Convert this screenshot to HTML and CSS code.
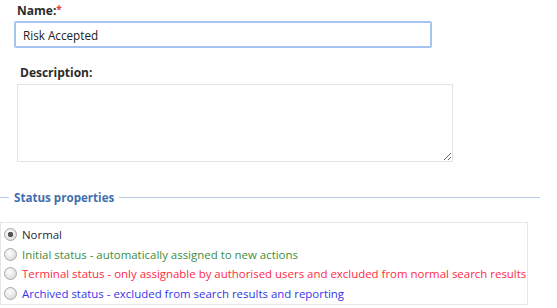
FILE: index.html
```html
<!doctype html>
<html lang="en">
    <head>
        <meta charset="UTF-8" />
        <title>Edit Status</title>
        <link rel="stylesheet" href="styles.css">
    </head>
    <body>
        <form class="status-form">
            <div class="form-group name-group">
                <label for="statusName">Name:<span class="required">*</span></label>
                <input type="text" id="statusName" class="text-input" value="Risk Accepted" />
            </div>

            <div class="form-group desc-group">
                <label for="statusDesc">Description:</label>
                <textarea id="statusDesc" class="text-area"></textarea>
            </div>

            <fieldset class="status-props">
                <legend>Status properties</legend>
                <div class="option-list">
                    <label class="option normal">
                        <input type="radio" name="statusType" checked />
                        <span>Normal</span>
                    </label>
                    <label class="option initial">
                        <input type="radio" name="statusType" />
                        <span>Initial status - automatically assigned to new actions</span>
                    </label>
                    <label class="option terminal">
                        <input type="radio" name="statusType" />
                        <span>Terminal status - only assignable by authorised users and excluded from normal search results</span>
                    </label>
                    <label class="option archived">
                        <input type="radio" name="statusType" />
                        <span>Archived status - excluded from search results and reporting</span>
                    </label>
                </div>
            </fieldset>
        </form>
    </body>
</html>
```

FILE: styles.css
```css
:root {
    --text-color: #222;
    --label-color: #2b2b2b;
    --focus-border: #a6c4f2;
    --input-border: #dde3ea;
    --legend-color: #3f6fae;
    --legend-line: #b9cae6;
    --box-border: #e9e7df;
}

body {
    margin: 0;
    font-family: "Open Sans", sans-serif;
    font-size: 12px;
    color: var(--text-color);
    background: #fff;
}

.status-form {
    display: flex;
    flex-direction: column;
    padding-top: 3px;
}

.form-group {
    display: flex;
    flex-direction: column;
    align-items: flex-start;
}

.form-group label {
    font-weight: 700;
    color: var(--label-color);
    line-height: 16px;
    margin-bottom: 2px;
}

.required {
    color: #e23b3b;
    font-size: 10px;
    vertical-align: top;
    line-height: 12px;
}

.name-group {
    padding-left: 14px;
}

.name-group label {
    margin-left: 3px;
}

.text-input {
    box-sizing: border-box;
    width: 418px;
    height: 27px;
    padding: 0 7px;
    border: 2px solid var(--focus-border);
    border-radius: 2px;
    font-family: inherit;
    font-size: 11.7px;
    color: var(--text-color);
    outline: none;
}

.desc-group {
    padding-left: 17px;
    margin-top: 17px;
}

.desc-group label {
    margin-left: 3px;
    margin-bottom: 3px;
}

.text-area {
    box-sizing: border-box;
    width: 436px;
    height: 78px;
    border: 1px solid var(--input-border);
    border-radius: 0;
    font-family: inherit;
    font-size: 12px;
    resize: both;
    outline: none;
}

.status-props {
    margin: 28px 0 0;
    padding: 0;
    width: 540px;
    border: none;
    border-top: 1px solid var(--legend-line);
}

.status-props legend {
    margin-left: 9px;
    padding: 0 5px;
    color: var(--legend-color);
    font-weight: 700;
    font-size: 11.6px;
}

.option-list {
    box-sizing: border-box;
    width: 528px;
    margin-top: 17px;
    padding: 2px 0 1px 3px;
    border: 1px solid var(--box-border);
    display: flex;
    flex-direction: column;
    font-size: 11.45px;
}

.option {
    display: flex;
    align-items: center;
    gap: 5px;
    height: 19.5px;
    white-space: nowrap;
}

.option input {
    appearance: none;
    margin: 0;
    width: 13px;
    height: 13px;
    border-radius: 50%;
    border: 1px solid #a9a9a9;
    background: radial-gradient(circle at 40% 35%, #fdfdfd 0%, #e6e6e6 55%, #cfcfcf 100%);
    box-sizing: border-box;
    flex: none;
}

.option input:checked {
    background:
        radial-gradient(circle, #555 0 2.5px, transparent 3px),
        radial-gradient(circle at 40% 35%, #fdfdfd 0%, #e6e6e6 55%, #cfcfcf 100%);
}

.normal span {
    color: #2a1f3a;
}

.initial span {
    color: #3e8c3e;
}

.terminal span {
    color: #ff2a45;
}

.archived span {
    color: #3535e8;
}
```
